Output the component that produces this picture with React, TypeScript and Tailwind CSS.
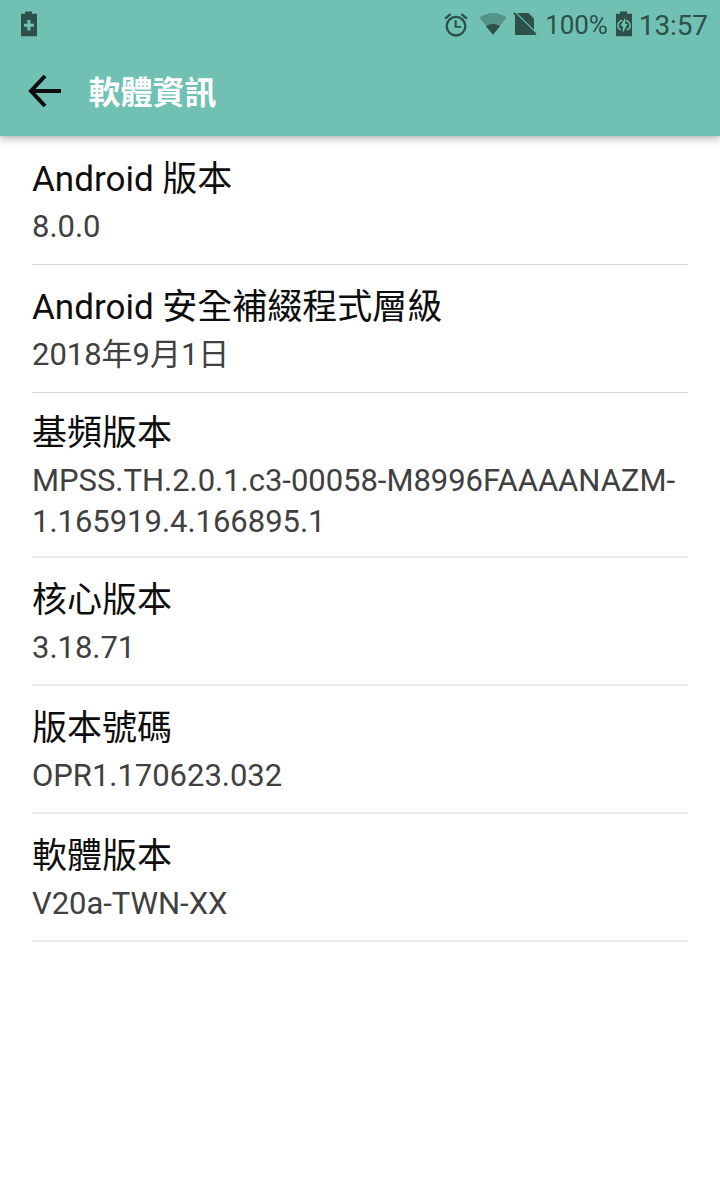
import React from "react";

type Item = { title: string; value: string[]; box: string };

const items: Item[] = [
  { title: "Android 版本", value: ["8.0.0"], box: "h-[129px] pt-[23px] border-b border-[#d9d9d9]" },
  { title: "Android 安全補綴程式層級", value: ["2018年9月1日"], box: "h-[128px] pt-[22px] border-b border-[#d9d9d9]" },
  {
    title: "基頻版本",
    value: ["MPSS.TH.2.0.1.c3-00058-M8996FAAAANAZM-", "1.165919.4.166895.1"],
    box: "h-[165px] pt-[20px] border-b-2 border-[#ebebeb]",
  },
  { title: "核心版本", value: ["3.18.71"], box: "h-[128px] pt-[22px] border-b-2 border-[#ebebeb]" },
  { title: "版本號碼", value: ["OPR1.170623.032"], box: "h-[128px] pt-[22px] border-b-2 border-[#ebebeb]" },
  { title: "軟體版本", value: ["V20a-TWN-XX"], box: "h-[128px] pt-[22px] border-b-2 border-[#ebebeb]" },
];

function BatterySaverIcon() {
  return (
    <svg className="h-[26px] w-[18px]" viewBox="0 0 18 26" fill="currentColor">
      <path fillRule="evenodd" d="M5 0.5h7v2.2h5V25.3H1V2.7h4zM7.4 9v3.7H4v3h3.4v3.7h3v-3.7H14v-3h-3.6V9z" />
    </svg>
  );
}

function AlarmIcon() {
  return (
    <svg className="mt-px h-[28px] w-[28px]" viewBox="0 0 24 24" fill="currentColor">
      <path d="M22 5.72l-4.6-3.86-1.29 1.53 4.6 3.86L22 5.72zM7.88 3.39L6.6 1.86 2 5.71l1.29 1.53 4.59-3.85zM12.6 8H10.8v6.4h5.6v-1.6h-3.8V8zM12 4a9 9 0 100 18 9 9 0 000-18zm0 16a7 7 0 110-14 7 7 0 010 14z" />
    </svg>
  );
}

function WifiIcon() {
  return (
    <svg className="h-[22px] w-[28px]" viewBox="0 0 28 22" fill="currentColor">
      <path opacity="0.4" d="M0.3 4.6Q14-4.4 27.7 4.6L14 21.8z" />
      <path d="M7 13.2Q14 8.8 21 13.2L14 21.8z" />
    </svg>
  );
}

function NoSimIcon() {
  return (
    <svg className="h-[24px] w-[24px]" viewBox="0 0 24 24" fill="currentColor">
      <path d="M4 1h11.5L21 6.4v11.4z" />
      <path d="M0.2 1.6L1.6 0.2L23.6 21.8L22.2 23.2L20.8 22.6L20 23H2.6L2 22.4V3.4z" />
    </svg>
  );
}

function ChargingIcon() {
  return (
    <svg className="h-[26px] w-[18px]" viewBox="0 0 18 26" fill="currentColor">
      <path d="M5 0.5h7v2.2h5V25.3H1V2.7h4z" />
      <path
        d="M7.2 9.2C1.6 11.4 1.8 17 5.8 19M10.8 9.2c5.6 2.2 5.4 7.8 1.2 9.8"
        fill="none"
        stroke="#70c1b3"
        strokeWidth="1.5"
      />
      <path d="M10.2 6.4v6.6h2.4L7.8 21.8v-6.8H5.4z" fill="#70c1b3" />
    </svg>
  );
}

export default function App() {
  return (
    <div className="h-[1196px] w-[720px] overflow-hidden bg-white font-['Roboto','Noto_Sans_CJK_TC',sans-serif]">
      <header className="h-[136px] bg-[#70c1b3] shadow-[0_2px_8px_rgba(0,0,0,0.35)]">
        <div className="flex h-[48px] items-center pl-[20px] pr-[12px] text-[#2d5049]">
          <BatterySaverIcon />
          <div className="ml-auto flex items-center">
            <AlarmIcon />
            <div className="ml-[9px] flex">
              <WifiIcon />
            </div>
            <div className="ml-[6px] flex">
              <NoSimIcon />
            </div>
            <span className="ml-[8px] pt-[2px] text-[26px] leading-[30px] tracking-[-0.1px]">100%</span>
            <div className="ml-[7px] flex">
              <ChargingIcon />
            </div>
            <span className="ml-[6px] pt-[3px] text-[28px] leading-[32px] tracking-[-0.1px]">13:57</span>
          </div>
        </div>
        <div className="flex h-[88px] items-center pb-[2px] pl-[28px]">
          <svg className="h-[34px] w-[34px]" viewBox="0 0 34 34" fill="none" stroke="#0d0d0d" strokeWidth="4">
            <path d="M33 17H3M17 2L3 17l14 15" />
          </svg>
          <h1 className="ml-[26.5px] pt-[4px] text-[32px] font-bold text-white">軟體資訊</h1>
        </div>
      </header>
      <main className="px-8">
        {items.map((it) => (
          <section key={it.title} className={it.box}>
            <h2 className="h-[47px] whitespace-nowrap text-[35px] leading-[42px] text-[#0d0d0d]">{it.title}</h2>
            {it.value.map((v) => (
              <p key={v} className="whitespace-nowrap text-[31px] leading-[41px] tracking-[-0.03px] text-[#404040]">
                {v}
              </p>
            ))}
          </section>
        ))}
      </main>
    </div>
  );
}
